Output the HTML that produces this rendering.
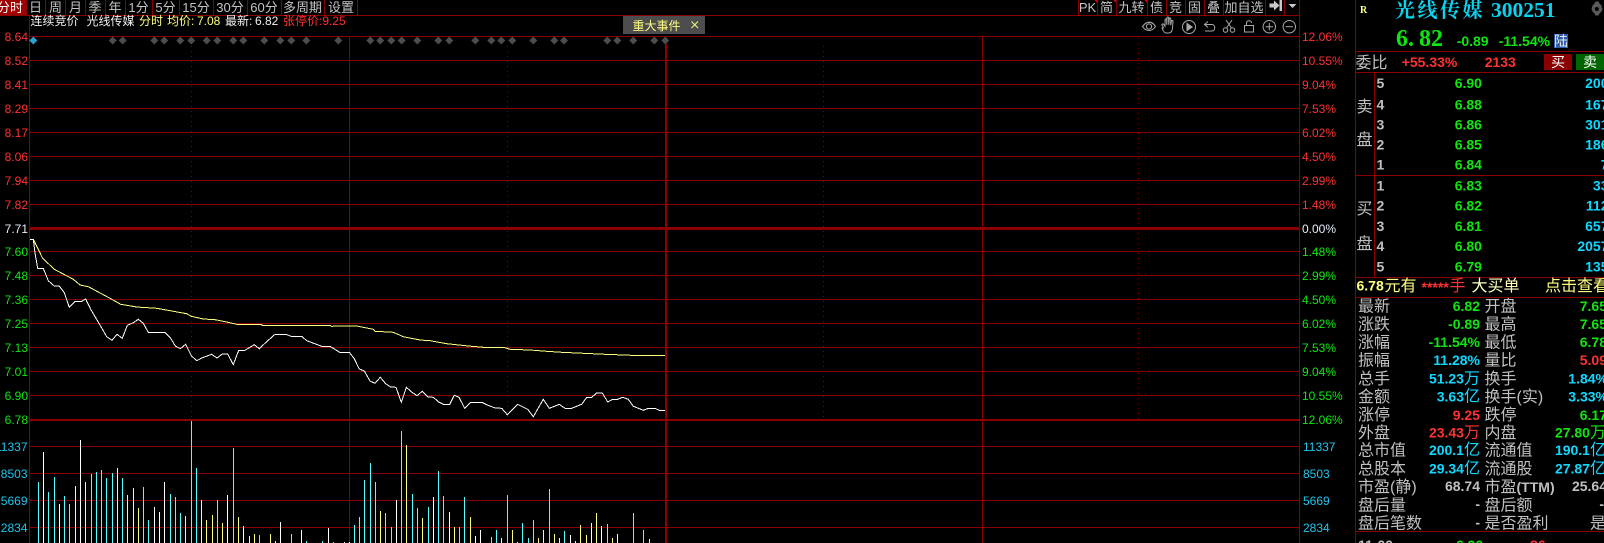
<!DOCTYPE html>
<html><head><meta charset="utf-8"><title>光线传媒 300251</title>
<style>
html,body{margin:0;padding:0;background:#000;width:1604px;height:543px;overflow:hidden}
svg{display:block}
text{font-family:"Liberation Sans","WenQuanYi Zen Hei","Noto Sans CJK SC",sans-serif;white-space:pre}
.nav{font-size:13px;fill:#c4c4c4;text-anchor:middle}
.h{font-size:12px}
.l{font-size:12px;text-anchor:end}
.r{font-size:12px}
.red{fill:#ff3232}.grn{fill:#0fe60f}.cy{fill:#10d8ff}.wh{fill:#f0f0f0}.gr{fill:#c0c0c0}.yl{fill:#ffff80}
.lc{fill:#20c4ec}
.cn{font-size:16px}
.b{font-size:14px;font-weight:bold}
.e{text-anchor:end}
.u{font-size:16px;font-weight:normal}
</style></head><body>
<svg width="1604" height="543" viewBox="0 0 1604 543" xmlns="http://www.w3.org/2000/svg" shape-rendering="crispEdges">
<rect width="1604" height="543" fill="#000"/>
<!-- nav -->
<rect x="0" y="0" width="26" height="15" fill="#a00000"/>
<g stroke="#8a0000" fill="none">
<path d="M0 15.5H1299"/>
<path d="M26.5 0V15M45.5 0V15M65.5 0V15M85.5 0V15M105.5 0V15M125.5 0V15M152.5 0V15M179.5 0V15M213.5 0V15M247.5 0V15M281.5 0V15M324.5 0V15M357.5 0V15"/>
<path d="M1078.5 0V15M1097.5 0V15M1116.5 0V15M1147.5 0V15M1166.5 0V15M1185.5 0V15M1204.5 0V15M1223.5 0V15M1265.5 0V15M1284.5 0V15"/>
</g>
<text class="nav" x="10" y="12" style="fill:#fff">分时</text>
<text class="nav" x="35.5" y="12">日</text><text class="nav" x="55.5" y="12">周</text><text class="nav" x="75.5" y="12">月</text><text class="nav" x="95" y="12">季</text><text class="nav" x="115" y="12">年</text>
<text class="nav" x="138.5" y="12">1分</text><text class="nav" x="165.5" y="12">5分</text><text class="nav" x="196" y="12">15分</text><text class="nav" x="230" y="12">30分</text><text class="nav" x="264" y="12">60分</text><text class="nav" x="302.5" y="12">多周期</text><text class="nav" x="341" y="12">设置</text>
<text class="nav" x="1087.5" y="12">PK</text><text class="nav" x="1106.5" y="12">简</text><text class="nav" x="1131.5" y="12">九转</text><text class="nav" x="1156.5" y="12">债</text><text class="nav" x="1175.5" y="12">竞</text><text class="nav" x="1194.5" y="12">固</text><text class="nav" x="1213.5" y="12">叠</text><text class="nav" x="1244" y="12">加自选</text>
<g fill="#e00000"><path d="M1094 0h3v3zM1113 0h3v3zM1144 0h3v3z"/></g>
<path d="M1269.500 3.500h4.500V0.500l5.500 5-5.500 5V7.500h-4.500zM1279.500 0h2.500v11h-2.500zM1288.500 4h8l-4 4z" fill="#c8c8c8" shape-rendering="auto"/>
<!-- grid -->
<g stroke="#8a0000" fill="none">
<path d="M30 36.500H1299M30 60.500H1299M30 84.500H1299M30 108.500H1299M30 132.500H1299M30 156.500H1299M30 180.500H1299M30 204.500H1299M30 251.500H1299M30 275.500H1299M30 299.500H1299M30 323.500H1299M30 347.500H1299M30 371.500H1299M30 395.500H1299M30 446.500H1299M30 473.500H1299M30 500.500H1299M30 527.500H1299"/>
<path d="M29.500 15V543M1299.500 0V543M349.500 36V543M982.500 36V543"/>
<path d="M191.500 46V420M507.500 46V420M823.500 46V420M1138.500 38V420" stroke-dasharray="1 4"/>
<path d="M30 228.500H1299" stroke-width="3"/>
<path d="M30 420H1299" stroke-width="2"/>
<path d="M666 44V543" stroke-width="2" stroke="#900000"/>
</g>
<!-- header -->
<text class="h wh" x="30.500" y="25">连续竞价</text><text class="h wh" x="86.500" y="25">光线传媒</text><text class="h yl" x="139" y="25">分时</text><text class="h yl" x="167" y="25">均价:</text><text class="h yl" x="197" y="25">7.08</text><text class="h wh" x="225" y="25">最新:</text><text class="h wh" x="255" y="25">6.82</text><text class="h red" x="283" y="25">张停价:9.25</text>
<rect x="623" y="16" width="82" height="18" fill="#4d4d4d"/>
<text class="h yl" x="632.500" y="30">重大事件</text>
<path d="M691.500 21.500l6.500 6.500M698 21.500l-6.500 6.500" stroke="#ffff80" stroke-width=".9" fill="none" shape-rendering="auto"/>
<!-- tool icons -->
<g fill="none" stroke="#a8a8a8" stroke-width="1" shape-rendering="auto">
<path d="M1142.500 26.500c3.500-5 9.500-6 13-0-3.500 5.500-9.500 5-13 0z"/><circle cx="1149" cy="26.500" r="2.600"/><path d="M1143 26.500c3-6 10-6 12 0" opacity=".6"/>
<path d="M1163.500 28l-1.500-3c-.4-1 1-1.500 1.500-.7l1.500 2 .1-6.500c0-1.300 1.500-1.300 1.500 0l.2 5 .2-6.800c0-1.300 1.600-1.300 1.600 0l.1 6.800.6-6c.1-1.300 1.600-1.200 1.500.1l-.2 6.400 .9-4c.3-1.200 1.700-.9 1.500.3l-.6 7c-.3 3-1.500 4.400-4 4.400h-2.500c-1.700 0-2.900-2.500-3.900-5z"/>
<circle cx="1189" cy="27" r="6.500"/><path d="M1187 23.500l5.200 3.500-5.200 3.500z" fill="#a8a8a8"/>
<path d="M1208 21.500l-3.500 3 3.500 3M1204.500 24.500h7.500c1.700 0 2.700 1.500 2.700 3.300s-1 3.200-2.700 3.200h-7"/>
<circle cx="1225.500" cy="30" r="2.300"/><circle cx="1232.500" cy="30" r="2.300"/><path d="M1226.500 28l5.500-8M1231.500 28l-5.500-8"/>
<rect x="1244.500" y="25.500" width="9" height="6.500"/><path d="M1246.500 25.500v-2.500c0-3 5-3 5 0"/>
<circle cx="1269.300" cy="26.700" r="6.200"/><path d="M1265.600 26.700h7.400M1269.300 23v7.400"/>
<circle cx="1289.300" cy="26.700" r="6.200"/><path d="M1285.600 26.700h7.400"/>
</g>
<!-- diamonds -->
<g fill="#4d4d4d" shape-rendering="auto">
<path d="M112.700 36.500l4 4-4 4-4-4zM122.700 36.500l4 4-4 4-4-4zM154.300 36.500l4 4-4 4-4-4zM164.300 36.500l4 4-4 4-4-4zM180.300 36.500l4 4-4 4-4-4zM191.300 36.500l4 4-4 4-4-4zM206.700 36.500l4 4-4 4-4-4zM217.300 36.500l4 4-4 4-4-4zM233.300 36.500l4 4-4 4-4-4zM243.300 36.500l4 4-4 4-4-4zM264.300 36.500l4 4-4 4-4-4zM280.300 36.500l4 4-4 4-4-4zM291.300 36.500l4 4-4 4-4-4zM306.300 36.500l4 4-4 4-4-4zM338.300 36.500l4 4-4 4-4-4zM370.300 36.500l4 4-4 4-4-4zM380.300 36.500l4 4-4 4-4-4zM391.300 36.500l4 4-4 4-4-4zM401.700 36.500l4 4-4 4-4-4zM417.300 36.500l4 4-4 4-4-4zM438.300 36.500l4 4-4 4-4-4zM449.300 36.500l4 4-4 4-4-4zM475.300 36.500l4 4-4 4-4-4zM491.300 36.500l4 4-4 4-4-4zM501.300 36.500l4 4-4 4-4-4zM512.300 36.500l4 4-4 4-4-4zM533.300 36.500l4 4-4 4-4-4zM554.300 36.500l4 4-4 4-4-4zM564 36.500l4 4-4 4-4-4zM607.300 36.500l4 4-4 4-4-4zM617.300 36.500l4 4-4 4-4-4zM633.300 36.500l4 4-4 4-4-4zM654.300 36.500l4 4-4 4-4-4zM665.300 36.500l4 4-4 4-4-4z"/>
<path d="M33.300 36.500l4 4-4 4-4-4z" fill="#2f9fd0"/>
</g>
<!-- left labels -->
<g>
<text class="l red" x="28" y="41">8.64</text><text class="l red" x="28" y="65">8.52</text><text class="l red" x="28" y="89">8.41</text><text class="l red" x="28" y="113">8.29</text><text class="l red" x="28" y="137">8.17</text><text class="l red" x="28" y="161">8.06</text><text class="l red" x="28" y="185">7.94</text><text class="l red" x="28" y="209">7.82</text>
<text class="l" x="28" y="233" fill="#e6eeff">7.71</text>
<text class="l grn" x="28" y="256">7.60</text><text class="l grn" x="28" y="280">7.48</text><text class="l grn" x="28" y="304">7.36</text><text class="l grn" x="28" y="328">7.25</text><text class="l grn" x="28" y="352">7.13</text><text class="l grn" x="28" y="376">7.01</text><text class="l grn" x="28" y="400">6.90</text><text class="l grn" x="28" y="424">6.78</text>
<text class="l lc" x="27.500" y="451">11337</text><text class="l lc" x="27.500" y="478">8503</text><text class="l lc" x="27.500" y="505">5669</text><text class="l lc" x="27.500" y="532">2834</text>
</g>
<!-- right labels -->
<g>
<text class="r red" x="1302" y="41">12.06%</text><text class="r red" x="1302" y="65">10.55%</text><text class="r red" x="1302" y="89">9.04%</text><text class="r red" x="1302" y="113">7.53%</text><text class="r red" x="1302" y="137">6.02%</text><text class="r red" x="1302" y="161">4.50%</text><text class="r red" x="1302" y="185">2.99%</text><text class="r red" x="1302" y="209">1.48%</text>
<text class="r" x="1302" y="233" fill="#e6eeff">0.00%</text>
<text class="r grn" x="1302" y="256">1.48%</text><text class="r grn" x="1302" y="280">2.99%</text><text class="r grn" x="1302" y="304">4.50%</text><text class="r grn" x="1302" y="328">6.02%</text><text class="r grn" x="1302" y="352">7.53%</text><text class="r grn" x="1302" y="376">9.04%</text><text class="r grn" x="1302" y="400">10.55%</text><text class="r grn" x="1302" y="424">12.06%</text>
<text class="r lc" x="1303" y="451">11337</text><text class="r lc" x="1303" y="478">8503</text><text class="r lc" x="1303" y="505">5669</text><text class="r lc" x="1303" y="532">2834</text>
</g>
<!-- price lines -->
<polyline fill="none" stroke="#ffff80" stroke-width="1" points="30,239.300 33.300,239.300 42.700,258.300 54.300,269.300 73.300,279.300 80,285 88.300,286.700 110,298.300 120.700,304.300 136.700,307 156.700,308.300 186.700,313.700 191.300,316.300 203.300,319 215,319.700 226.700,322 236.700,324.300 261.700,324.300 262,325.300 330,325.300 331.700,326.300 340,326 356.700,326 373.300,329.300 375,331.300 393.300,332.300 403.300,336.700 420,340 430,340.700 446.700,343.700 468.300,346 483.300,347.300 505,347.700 510,349.300 530,350 546.700,351.300 561.700,352.300 583.300,353.300 605,354.300 631,355.300 665,355.300"/>
<polyline fill="none" stroke="#ffffff" stroke-width="1" points="30,239.300 33.300,239.300 35,253 37.700,268.300 43.300,268.300 48.300,280.700 54.300,286 59.300,286 64.300,292.700 69.300,307.300 75.300,301.300 81.700,301.300 85.700,299 90.700,309.300 101,326.700 106.700,336.700 112,340.300 117,334.300 122.300,338.300 127.300,325.300 133.300,322.700 138.300,319.300 143.300,323.300 148.300,332.300 165,332.300 170.700,338.300 175.300,346 180.300,348.700 185.700,344.300 191.300,355.700 196.700,360.700 201.700,358 211.700,354.300 217,358 222.300,354 227.700,354 233.300,364.700 238.700,350.300 245,350.300 254.300,344.700 259.300,348.700 265,343.300 275,334.300 286,334.300 291,336.300 301.700,336.300 306.700,340.700 321.700,346.300 330,346.300 340,352.500 349.300,352.300 354,358.300 359.300,369 364.300,371 370,381 375,383.300 380.300,377.300 385.700,383.700 390.700,387 396,387.300 401.300,402.300 406.300,387.300 411.700,392 417,395.700 422.300,391.300 428,397 433.300,397.300 438.700,402 443.300,404.300 449.700,404.300 454.300,395.300 459,397.300 464.700,408.300 470.700,402.300 481.700,402.300 486.700,404.700 495,408 501.700,408.300 507.300,414.700 517.700,404.300 527.700,409.300 533.300,416.700 543.300,399.300 549.300,408.300 559.300,404.300 565,408.300 571.700,408.300 581.700,404.300 586.700,397.300 591.700,397.300 596.700,393 602.300,393 607.700,402 612.700,399.300 617.700,399.300 622.700,397.300 628.300,399.300 633.300,406.300 643.300,410.300 648.300,408.300 655,408.300 659.300,410.300 665,410.300"/>
<!-- volume bars -->
<path fill="none" stroke="#54ffff" d="M38.500 482V543M48.500 492V543M54.500 477V543M64.500 496V543M69.500 504V543M91.500 474V543M96.500 472V543M101.500 470V543M106.500 478V543M112.500 473V543M122.500 478V543M143.500 487V543M148.500 520V543M170.500 494V543M175.500 497V543M180.500 513V543M191.500 421V543M196.500 468V543M217.500 500V543M233.500 448V543M259.500 535V543M291.500 534V543M306.500 541V543M322.500 541V543M333.500 542V543M354.500 525V543M359.500 517V543M364.500 480V543M370.500 463V543M375.500 482V543M385.500 513V543M391.500 527V543M401.500 431V543M412.500 494V543M417.500 508V543M428.500 507V543M438.500 471V543M443.500 496V543M459.500 527V543M464.500 497V543M491.500 537V543M496.500 530V543M507.500 495V543M522.500 523V543M528.500 538V543M533.500 520V543M549.500 489V543M564.500 531V543M607.500 524V543M633.500 513V543M643.500 530V543"/>
<path fill="none" stroke="#ffffff" d="M43.500 452V543M59.500 504V543M80.500 440V543M154.500 507V543M159.500 512V543M164.500 482V543M227.500 495V543M243.500 526V543M280.500 522V543M301.500 530V543M328.500 528V543M344.500 542V543M349.500 542V543M396.500 500V543M433.500 497V543M449.500 512V543M475.500 536V543M480.500 530V543M501.500 538V543M517.500 542V543M570.500 535V543M591.500 523V543M601.500 526V543M617.500 534V543"/>
<path fill="none" stroke="#ffff80" d="M75.500 486V543M85.500 482V543M117.500 468V543M127.500 495V543M133.500 488V543M138.500 508V543M185.500 516V543M201.500 500V543M206.500 520V543M212.500 515V543M222.500 523V543M238.500 517V543M249.500 536V543M254.500 534V543M270.500 534V543M275.500 541V543M380.500 511V543M406.500 445V543M422.500 518V543M454.500 527V543M470.500 517V543M512.500 530V543M538.500 538V543M543.500 530V543M554.500 534V543M559.500 538V543M575.500 541V543M580.500 525V543M586.500 535V543M596.500 513V543M612.500 538V543M649.500 539V543"/>
<!-- right panel -->
<g stroke="#8a0000" fill="none">
<path d="M1355.500 0V543M1356 51.500H1604M1356 72.500H1604M1374.500 72V277M1356 175.500H1604M1356 277.500H1604M1356 297.500H1604M1356 531.500H1604"/>
</g>
<text x="1360" y="13" font-size="10" font-weight="bold" fill="#ffff80" style="font-family:'Liberation Serif',serif">R</text>
<text x="1395" y="17" font-size="20" font-weight="bold" fill="#08d4f0" letter-spacing="2.500" style="font-family:'Noto Serif CJK SC','Liberation Serif',serif">光线传媒</text>
<text x="1491" y="17" font-size="21.500" font-weight="bold" fill="#08d4f0" style="font-family:'Liberation Serif',serif">300251</text>
<path d="M1592.500 5.500l2-2 1-2h3l1 2 2 2v1l1 2.500-1 2.500-2 2-1 2h-3l-1-2-2-2-1-2.500z" fill="#5a5a5a" shape-rendering="auto"/><circle cx="1596.800" cy="9" r="2" fill="#000" shape-rendering="auto"/>
<text x="1396" y="46" font-size="24" font-weight="bold" fill="#0fe60f" style="font-family:'Liberation Serif',serif">6.<tspan dx="5">82</tspan></text>
<text class="b grn" x="1456.700" y="46">-0.89</text>
<text class="b grn" x="1498.700" y="46">-11.54%</text>
<rect x="1554" y="34" width="14" height="14" fill="#2d5ba8"/>
<text x="1554" y="46" font-size="14" fill="#e8e8e8">陆</text>
<text class="cn gr" x="1355.500" y="68">委比</text>
<text class="b red" x="1401.700" y="67">+55.33%</text>
<text class="b red" x="1484.700" y="67">2133</text>
<rect x="1544" y="54" width="28" height="16" fill="#8b0000"/><text x="1551" y="67" font-size="14" fill="#fff">买</text>
<rect x="1576" y="54" width="28" height="16" fill="#006400"/><text x="1583" y="67" font-size="14" fill="#fff">卖</text>
<!-- order book -->
<g>
<text class="cn gr" x="1356.500" y="112">卖</text><text class="cn gr" x="1356.500" y="145">盘</text>
<text class="cn gr" x="1356.500" y="214">买</text><text class="cn gr" x="1356.500" y="249">盘</text>
<text class="b gr" x="1376.500" y="88">5</text><text class="b grn" x="1454.700" y="88">6.90</text><text class="b cy e" x="1608.500" y="88">200</text>
<text class="b gr" x="1376.500" y="109.500">4</text><text class="b grn" x="1454.700" y="109.500">6.88</text><text class="b cy e" x="1608.500" y="109.500">167</text>
<text class="b gr" x="1376.500" y="129.500">3</text><text class="b grn" x="1454.700" y="129.500">6.86</text><text class="b cy e" x="1608.500" y="129.500">301</text>
<text class="b gr" x="1376.500" y="149.500">2</text><text class="b grn" x="1454.700" y="149.500">6.85</text><text class="b cy e" x="1608.500" y="149.500">186</text>
<text class="b gr" x="1376.500" y="169.500">1</text><text class="b grn" x="1454.700" y="169.500">6.84</text><text class="b cy e" x="1608.500" y="169.500">7</text>
<text class="b gr" x="1376.500" y="190.500">1</text><text class="b grn" x="1454.700" y="190.500">6.83</text><text class="b cy e" x="1608.500" y="190.500">33</text>
<text class="b gr" x="1376.500" y="210.500">2</text><text class="b grn" x="1454.700" y="210.500">6.82</text><text class="b cy e" x="1608.500" y="210.500">112</text>
<text class="b gr" x="1376.500" y="231">3</text><text class="b grn" x="1454.700" y="231">6.81</text><text class="b cy e" x="1608.500" y="231">657</text>
<text class="b gr" x="1376.500" y="251">4</text><text class="b grn" x="1454.700" y="251">6.80</text><text class="b cy e" x="1608.500" y="251">2057</text>
<text class="b gr" x="1376.500" y="271.500">5</text><text class="b grn" x="1454.700" y="271.500">6.79</text><text class="b cy e" x="1608.500" y="271.500">135</text>
</g>
<text class="b yl" x="1356.500" y="290.500">6.78</text><text class="cn yl" x="1384.500" y="291">元有</text>
<text class="b red" x="1421.500" y="292">*****</text><text class="cn red" x="1449.500" y="291">手</text>
<text class="cn" x="1471.500" y="291" fill="#ffffc0">大买单</text>
<text class="cn yl" x="1545" y="291">点击查看</text>
<!-- stats -->
<g class="cn gr">
<text x="1358" y="311.500">最新</text><text x="1358" y="329.500">涨跌</text><text x="1358" y="347.500">涨幅</text><text x="1358" y="365.500">振幅</text><text x="1358" y="384">总手</text><text x="1358" y="402">金额</text><text x="1358" y="420">涨停</text><text x="1358" y="438">外盘</text><text x="1358" y="455.500">总市值</text><text x="1358" y="474">总股本</text><text x="1358" y="492">市盈(静)</text><text x="1358" y="510.500">盘后量</text><text x="1358" y="528.500">盘后笔数</text>
<text x="1484.500" y="311.500">开盘</text><text x="1484.500" y="329.500">最高</text><text x="1484.500" y="347.500">最低</text><text x="1484.500" y="365.500">量比</text><text x="1484.500" y="384">换手</text><text x="1484.500" y="402">换手(实)</text><text x="1484.500" y="420">跌停</text><text x="1484.500" y="438">内盘</text><text x="1484.500" y="455.500">流通值</text><text x="1484.500" y="474">流通股</text><text x="1484.500" y="492">市盈<tspan font-size="14" font-weight="bold">(TTM)</tspan></text><text x="1484.500" y="510.500">盘后额</text><text x="1484.500" y="528.500">是否盈利</text>
</g>
<g class="b e">
<text class="grn e" x="1480" y="311">6.82</text><text class="grn e" x="1480" y="329">-0.89</text><text class="grn e" x="1480" y="347">-11.54%</text><text class="cy e" x="1480" y="365">11.28%</text>
<text class="cy e" x="1480" y="383.500">51.23<tspan class="u">万</tspan></text><text class="cy e" x="1480" y="401.500">3.63<tspan class="u">亿</tspan></text>
<text class="red e" x="1480" y="420">9.25</text><text class="red e" x="1480" y="437.500">23.43<tspan class="u">万</tspan></text>
<text class="cy e" x="1480" y="455">200.1<tspan class="u">亿</tspan></text><text class="cy e" x="1480" y="473.500">29.34<tspan class="u">亿</tspan></text>
<text class="gr e" x="1480" y="491">68.74</text><text class="gr e" x="1480" y="509">-</text><text class="gr e" x="1480" y="527.500">-</text>
<text class="grn e" x="1607" y="311">7.65</text><text class="grn e" x="1607" y="329">7.65</text><text class="grn e" x="1607" y="347">6.78</text><text class="red e" x="1607" y="365">5.09</text>
<text class="cy e" x="1608" y="383.500">1.84%</text><text class="cy e" x="1608" y="401.500">3.33%</text>
<text class="grn e" x="1607" y="420">6.17</text><text class="grn e" x="1606" y="437.500">27.80<tspan class="u">万</tspan></text>
<text class="cy e" x="1606" y="455">190.1<tspan class="u">亿</tspan></text><text class="cy e" x="1606" y="473.500">27.87<tspan class="u">亿</tspan></text>
<text class="gr e" x="1607" y="491">25.64</text><text class="gr e" x="1604" y="509">-</text>
<text class="gr e" x="1606" y="528.500"><tspan class="u">是</tspan></text>
</g>
<!-- cut-off bottom row -->
<text class="b gr" x="1358" y="550">11:00</text><text class="b grn" x="1456" y="550">6.90</text><text class="b red" x="1530" y="550">86</text>
</svg>
</body></html>
